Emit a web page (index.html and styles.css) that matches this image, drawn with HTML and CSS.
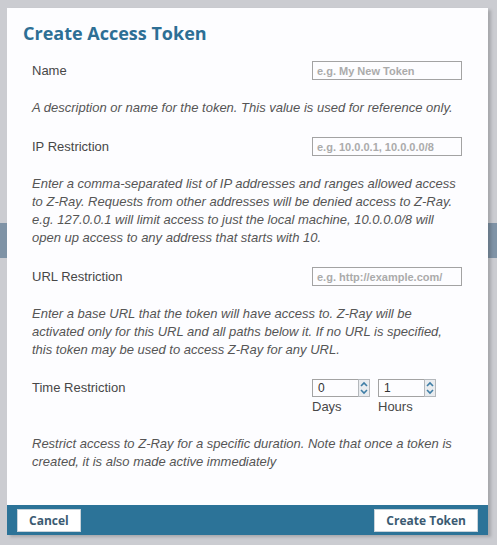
FILE: index.html
```html
<!DOCTYPE html>
<html>
<head>
<meta charset="utf-8">
<link rel="stylesheet" href="styles.css">
</head>
<body>
<div class="dialog">
  <div class="header"><h1 class="title">Create Access Token</h1></div>
  <div class="content">
    <div class="field">
      <div class="row">
        <span class="label">Name</span>
        <div class="input"><span class="ph">e.g. My New Token</span></div>
      </div>
      <p class="desc">A description or name for the token. This value is used for reference only.</p>
    </div>
    <div class="field">
      <div class="row">
        <span class="label">IP Restriction</span>
        <div class="input"><span class="ph">e.g. 10.0.0.1, 10.0.0.0/8</span></div>
      </div>
      <p class="desc">Enter a comma-separated list of IP addresses and ranges allowed access to Z-Ray. Requests from other addresses will be denied access to Z-Ray. e.g. 127.0.0.1 will limit access to just the local machine, 10.0.0.0/8 will open up access to any address that starts with 10.</p>
    </div>
    <div class="field">
      <div class="row">
        <span class="label">URL Restriction</span>
        <div class="input"><span class="ph">e.g. http://example.com/</span></div>
      </div>
      <p class="desc">Enter a base URL that the token will have access to. Z-Ray will be activated only for this URL and all paths below it. If no URL is specified, this token may be used to access Z-Ray for any URL.</p>
    </div>
    <div class="field">
      <div class="row row-time">
        <span class="label">Time Restriction</span>
        <div class="spins">
          <div class="spin-group">
            <div class="spin"><span class="val">0</span>
              <svg class="arrows" width="12" height="18" viewBox="0 0 12 18"><rect x="0.5" y="0.5" width="11" height="17" fill="#e9ecef" stroke="#b4b8bc"/><path d="M3 7 L6 4 L9 7" fill="none" stroke="#3f7ea6" stroke-width="1.6"/><path d="M3 11 L6 14 L9 11" fill="none" stroke="#3f7ea6" stroke-width="1.6"/></svg>
            </div>
            <span class="unit">Days</span>
          </div>
          <div class="spin-group">
            <div class="spin"><span class="val">1</span>
              <svg class="arrows" width="12" height="18" viewBox="0 0 12 18"><rect x="0.5" y="0.5" width="11" height="17" fill="#e9ecef" stroke="#b4b8bc"/><path d="M3 7 L6 4 L9 7" fill="none" stroke="#3f7ea6" stroke-width="1.6"/><path d="M3 11 L6 14 L9 11" fill="none" stroke="#3f7ea6" stroke-width="1.6"/></svg>
            </div>
            <span class="unit">Hours</span>
          </div>
        </div>
      </div>
      <p class="desc">Restrict access to Z-Ray for a specific duration. Note that once a token is created, it is also made active immediately</p>
    </div>
  </div>
  <div class="footer">
    <button class="btn">Cancel</button>
    <button class="btn">Create Token</button>
  </div>
</div>
</body>
</html>
```
FILE: styles.css
```css
html, body {
  margin: 0;
  padding: 0;
}
body {
  width: 497px;
  height: 545px;
  overflow: hidden;
  background: linear-gradient(to bottom, #cbccd1 0, #cbccd1 223px, #7f93a6 223px, #7f93a6 258px, #cbccd1 258px);
  padding: 8px 0 0 7px;
  box-sizing: border-box;
}
.dialog {
  width: 481px;
  height: 527px;
  background: #fdfdff;
  display: flex;
  flex-direction: column;
  box-shadow: 3px 2px 3px rgba(0,0,0,0.18);
}
.header {
  padding: 13px 16px 0 16px;
}
.title {
  margin: 0;
  font-family: "Open Sans", sans-serif;
  font-weight: 700;
  font-size: 18px;
  line-height: 24px;
  color: #2d6f95;
}
.content {
  padding: 16px 26px 0 25px;
}
.field {
  margin-bottom: 20px;
}
.row {
  display: flex;
  justify-content: space-between;
  align-items: center;
  height: 19px;
}
.label {
  font-family: "Liberation Sans", Arial, sans-serif;
  font-size: 13px;
  color: #474747;
}
.input {
  width: 150px;
  height: 19px;
  box-sizing: border-box;
  border: 1px solid #a3a3a3;
  display: flex;
  align-items: center;
  padding-left: 4px;
}
.ph {
  font-family: "Liberation Sans", Arial, sans-serif;
  font-weight: 700;
  font-size: 11px;
  color: #ababab;
}
.desc {
  margin: 19px 0 0 0;
  font-family: "Liberation Sans", Arial, sans-serif;
  font-style: italic;
  font-size: 13px;
  line-height: 18px;
  color: #555;
}
.row-time {
  align-items: flex-start;
  height: auto;
}
.row-time .label {
  line-height: 18px;
}
.spins {
  display: flex;
  gap: 8px;
  width: 150px;
}
.spin-group {
  display: flex;
  flex-direction: column;
}
.spin {
  width: 58px;
  height: 18px;
  box-sizing: border-box;
  border: 1px solid #a3a3a3;
  display: flex;
  align-items: center;
  justify-content: space-between;
  padding-left: 5px;
}
.val {
  font-family: "Liberation Sans", Arial, sans-serif;
  font-size: 12px;
  color: #333;
}
.arrows {
  margin-right: -1px;
}
.unit {
  font-family: "Liberation Sans", Arial, sans-serif;
  font-size: 13px;
  color: #474747;
  line-height: 18px;
  margin-top: 1px;
}
.footer {
  margin-top: auto;
  height: 30px;
  background: #2c7398;
  display: flex;
  justify-content: space-between;
  align-items: flex-start;
  padding: 4px 10px 0 10px;
  box-sizing: border-box;
}
.btn {
  height: 23px;
  padding: 0 11px;
  background: #fff;
  border: 1px solid #c9d3da;
  font-family: "Open Sans", sans-serif;
  font-weight: 700;
  font-size: 12px;
  color: #3b5b72;
  cursor: pointer;
}
```
